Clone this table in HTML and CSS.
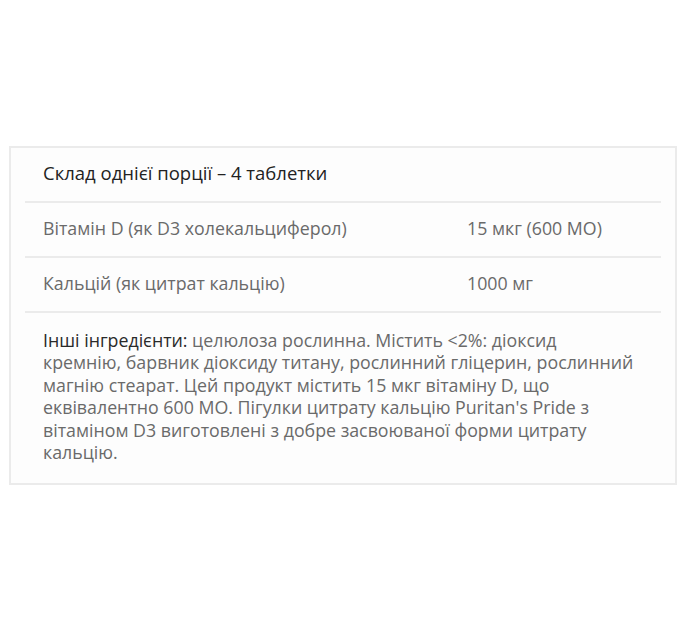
FILE: index.html
```html
<!DOCTYPE html>
<html lang="uk">
<head>
<meta charset="utf-8">
<link rel="stylesheet" href="styles.css">
</head>
<body>
<div class="panel">
  <div class="row head">Склад однієї порції – 4 таблетки</div>
  <div class="row item"><span class="name">Вітамін D (як D3 холекальциферол)</span><span class="val">15 мкг (600 МО)</span></div>
  <div class="row item"><span class="name">Кальцій (як цитрат кальцію)</span><span class="val">1000 мг</span></div>
  <p class="other"><span class="lbl">Інші інгредієнти:</span> целюлоза рослинна. Містить &lt;2%: діоксид<br>кремнію, барвник діоксиду титану, рослинний гліцерин, рослинний<br>магнію стеарат. Цей продукт містить 15 мкг вітаміну D, що<br>еквівалентно 600 МО. Пігулки цитрату кальцію Puritan's Pride з<br>вітаміном D3 виготовлені з добре засвоюваної форми цитрату<br>кальцію.</p>
</div>
</body>
</html>
```
FILE: styles.css
```css
html, body {
  margin: 0;
  background: #fff;
}
body {
  padding: 146px 5px 0 9px;
  font-family: "Open Sans", "Noto Sans", sans-serif;
  font-size: 17.8px;
}
.panel {
  width: 664px;
  border: 2px solid #ebebeb;
  background: #fdfdfd;
  padding-bottom: 20px;
}
.row {
  margin: 0 14px;
  padding: 0 18px 4px;
  box-sizing: border-box;
  height: 55px;
  display: flex;
  align-items: center;
  border-bottom: 2px solid #ebebeb;
}
.head {
  color: #222;
  font-size: 18.5px;
}
.item {
  color: #6a6a6a;
  display: grid;
  grid-template-columns: 424px 1fr;
  align-items: center;
}
.other {
  margin: 16px 0 0;
  padding: 0 20px 0 32px;
  line-height: 22.4px;
  color: #6a6a6a;
  white-space: nowrap;
}
.lbl {
  color: #2a2a2a;
}
```
